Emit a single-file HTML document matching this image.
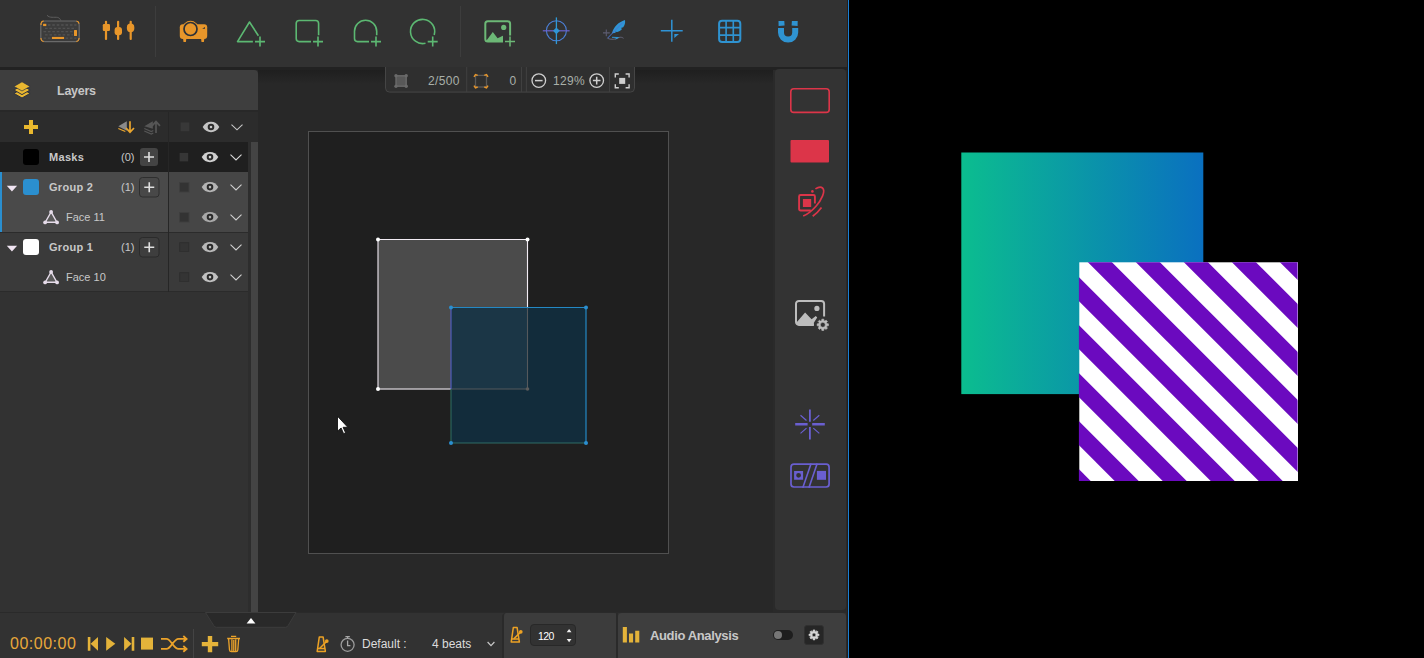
<!DOCTYPE html>
<html lang="en">
<head>
<meta charset="utf-8">
<title>Mapping</title>
<style>
*{box-sizing:border-box;margin:0;padding:0}
html,body{width:1424px;height:658px;overflow:hidden;background:#000;font-family:"Liberation Sans","DejaVu Sans",sans-serif;}
.abs,.app *,.out *{position:absolute}
.app{position:absolute;left:0;top:0;width:848px;height:658px;background:#282828;overflow:hidden}
.toolbar{left:0;top:0;width:848px;height:67px;background:#323232}
.tbshadow{left:0;top:67px;width:848px;height:3px;background:#222}
.vsep{width:1px;background:#3d3d3d}
.layers-head{left:0;top:70px;width:258px;height:40px;background:#3e3e3e;border-top-right-radius:4px}
.layers-head span{left:57px;top:14px;font-size:12.5px;letter-spacing:-.25px;font-weight:bold;color:#c6c6c6;line-height:14px;white-space:nowrap}
.lpanel{left:0;top:112px;width:258px;height:500px;background:#323232}
.row{left:0;width:248px;height:30px}
.row .t{font-size:11px;line-height:12px;color:#c8c8c8;white-space:nowrap}
.row .b{font-weight:bold;letter-spacing:.3px}
.sw{width:16px;height:16px;border-radius:3px;left:23px;top:7px}
.cb{left:179px;top:10px;width:10px;height:10px;background:#333;border:1px solid #3c3c3c}
.cbd{left:180px;top:11px;width:9px;height:9px;background:#363636}
.zt{font-size:12px;line-height:13px;color:#a9b0a9;white-space:nowrap;letter-spacing:.35px}
.bt{font-size:12px;line-height:13px;color:#dcdcdc;white-space:nowrap}
.out{position:absolute;left:849px;top:0;width:575px;height:658px;background:#000;overflow:hidden}
.blueline{left:847px;top:0;width:2px;height:658px;background:#1a80d4;border-left:1px solid #241e1b}
</style>
</head>
<body>
<div class="app">
  <div class="toolbar" id="toolbar">
    <div class="vsep" style="left:155px;top:6px;height:51px"></div>
    <div class="vsep" style="left:460px;top:6px;height:51px"></div>
    <svg style="left:0;top:0" width="848" height="67" viewBox="0 0 848 67" fill="none">
      <!-- keyboard -->
      <path d="M47 15.2c2.5 3.2 7.5 1.6 10.500 2.200c2 .5 2.800 1.800 3.300 3.100" stroke="#5e5e5e" stroke-width="1"/>
      <rect x="40.800" y="21" width="38.400" height="20.600" rx="4" fill="#3c3c3c" stroke="#6a6a6a" stroke-width="1.200"/>
      <g stroke="#515151" stroke-width="1.300" stroke-dasharray="2.600 1.800">
        <path d="M43.500 25h33M45 28.300h31M43.500 31.600h29M45 34.900h28M43.500 38.200h8M65.500 38.200h11"/>
      </g>
      <path d="M41 25v-1.500a3 3 0 0 1 2.600-2.600M76.500 21a3 3 0 0 1 2.600 2.600M41 38v1a3 3 0 0 0 2.600 2.600M79 38v1a3 3 0 0 1-2.600 2.600" stroke="#e8962a" stroke-width="1.200"/>
      <rect x="43.100" y="23.800" width="3.200" height="2.300" fill="#e8962a"/>
      <rect x="74" y="29.900" width="3" height="6.100" rx=".5" fill="#e8962a"/>
      <rect x="51.900" y="36.900" width="12.200" height="2.100" fill="#e8962a"/>
      <!-- sliders -->
      <g fill="#e8962a">
        <rect x="104.900" y="20.800" width="2.200" height="19.200" rx="1"/>
        <rect x="117" y="20.800" width="2.200" height="19.200" rx="1"/>
        <rect x="129.600" y="20.800" width="2.200" height="19.200" rx="1"/>
        <rect x="102.800" y="24" width="7.200" height="7" rx="1.200"/>
        <rect x="114.600" y="27" width="7.400" height="8.200" rx="3"/>
        <rect x="126.900" y="23.600" width="7.400" height="8.600" rx="3.600"/>
      </g>
      <!-- projector -->
      <g fill="#e8962a">
        <rect x="179.800" y="24.300" width="27.400" height="14.800" rx="3"/>
        <circle cx="190.500" cy="29" r="8.200"/>
        <path d="M183 38h3.400l-.5 4h-2.400zM201 38h3.400l-.5 4h-2.400z"/>
      </g>
      <circle cx="190.500" cy="29" r="6.500" stroke="#2c3138" stroke-width="1.700"/>
      <path d="M202.200 28.800l2.800-1.800v1.800z" fill="#2c3138"/>
      <!-- green shape tools -->
      <g stroke="#5cb872" stroke-width="1.600" stroke-linejoin="round">
        <path d="M252.900 41.600H237.500L249.500 22l8.900 13.700M255 41.600h10M260 36.600v10"/>
        <path d="M311 41.600h-11.800a3 3 0 0 1-3-3V23.500a3 3 0 0 1 3-3h16.400a3 3 0 0 1 3 3v11.800M313 41.600h10M318 36.600v10"/>
        <path d="M369 41.600h-11.500a3 3 0 0 1-3-3v-7.300a11.100 11.100 0 0 1 22.200 0v3.900M371 41.600h10M376 36.600v10"/>
        <path d="M425.500 43.200a12.100 12.100 0 1 1 8.700-8.300M427.700 41.600h10M432.700 36.600v10"/>
      </g>
      <!-- image add -->
      <rect x="485.300" y="21.200" width="24.800" height="20.200" rx="2.500" stroke="#6cb876" stroke-width="2"/>
      <circle cx="503.700" cy="27.400" r="2.600" fill="#6cb876"/>
      <path d="M486.500 40.500l6.300-8.500 4.800 6.300 5.300-2.600 5 4.800v1h-21.400z" fill="#6cb876"/>
      <path d="M503 35.500h12v12h-12z" fill="#323232"/>
      <path d="M505 41.600h10M510 36.600v10" stroke="#6cb876" stroke-width="1.500"/>
      <!-- crosshair -->
      <circle cx="556.400" cy="30.800" r="10" stroke="#4b7fd6" stroke-width="1.100"/>
      <path d="M542.800 30.800h26.800" stroke="#6a62cf" stroke-width="1.200"/>
      <path d="M556.400 17.400v26.700" stroke="#2f9ad8" stroke-width="1.300"/>
      <path d="M556.400 27.400l3.400 3.400-3.400 3.400-3.400-3.400z" fill="#2f96d6"/>
      <!-- feather -->
      <path d="M625 20c.5 3-.3 5.500-1.800 7.300l-2.300.6 1.200 1c-1.400 1.500-3 2.500-4.800 3.100l-2.200-.2.700 1c-1.300.4-2.600.5-3.800.4 1.500-6 6-11 13-13.200z" fill="#2f96d6"/>
      <path d="M622.500 22.800L607.500 38.200" stroke="#4a74d0" stroke-width="1"/>
      <path d="M603 32.900h6.800M606.300 29.600v6.600" stroke="#5c5c70" stroke-width="1.100"/>
      <path d="M607.500 38.300c3 1.600 8.500 1.300 11.500-.8 1.600-.6 3.400-.1 4.500.8" stroke="#6a6a80" stroke-width=".9"/>
      <path d="M612 37.300l6.500.2-3 1.500" stroke="#2f96d6" stroke-width="1"/>
      <!-- plus origin -->
      <path d="M660.800 30.800h21.900M671.800 19.800v21.900" stroke="#2f93d6" stroke-width="1.500"/>
      <path d="M674.300 34h4.700l-4.700 4z" fill="#2f93d6"/>
      <!-- grid -->
      <rect x="719.100" y="20.700" width="21.200" height="21.300" rx="3" stroke="#2f93d1" stroke-width="2"/>
      <path d="M726.100 20.700v21.300M733.300 20.700v21.300M719.100 27.600h21.200M719.100 35.100h21.200" stroke="#2f93d1" stroke-width="1.600"/>
      <!-- magnet -->
      <path d="M778 28.100v4.400a10.100 10.100 0 0 0 20.200 0v-4.400h-6v4.400a4.100 4.100 0 0 1-8.200 0v-4.400z" fill="#2f93d1"/>
      <path d="M778.500 21h5.800l.3 4.600-6 .5zM797.700 21h-5.800l-.3 4.600 6 .5z" fill="#2f93d1"/>
    </svg>
  </div>
  <div class="tbshadow"></div>
  <div class="layers-head"><span>Layers</span>
    <svg style="left:0;top:0" width="60" height="40" viewBox="0 70 60 40">
      <path d="M22 88.8l-8.100 4.600 8.100 4.600 8.100-4.600z" fill="#e9b730" stroke="#2c3140" stroke-width="1"/>
      <path d="M22 85.4l-8.100 4.600 8.100 4.600 8.100-4.600z" fill="#e9b730" stroke="#2c3140" stroke-width="1"/>
      <path d="M22 81.8l-8.100 4.600 8.100 4.600 8.100-4.600z" fill="#e9b730" stroke="#2c3140" stroke-width="0.7"/>
    </svg></div>
  <div class="lpanel" id="lpanel">
    <div class="abs" style="left:0;top:0;width:258px;height:30px;background:#2c2c2c"></div>
    <div class="abs" style="left:0;top:30px;width:248px;height:30px;background:#1f1f1f"></div>
    <div class="abs" style="left:0;top:60px;width:248px;height:60px;background:#4a4a4a"></div>
    <div class="abs" style="left:168px;top:60px;width:80px;height:60px;background:#464646"></div>
    <div class="abs" style="left:0;top:60px;width:1.500px;height:60px;background:#2a8fd0"></div>
    <div class="abs" style="left:0;top:120px;width:248px;height:60px;background:#3a3a3a"></div>
    
    <div class="abs" style="left:0;top:120px;width:248px;height:1px;background:#2b2b2b"></div>
    <div class="abs" style="left:0;top:179px;width:248px;height:1px;background:#2b2b2b"></div>
    <div class="abs" style="left:168px;top:0;width:1px;height:180px;background:#262626"></div>
    <div class="abs" style="left:248px;top:30px;width:3px;height:470px;background:#2d2d2d"></div>
    <div class="abs" style="left:251px;top:30px;width:7px;height:470px;background:#444"></div>
    <div class="row" style="top:30px"><div class="sw" style="background:#000"></div><span class="t b" style="left:49px;top:9px">Masks</span><span class="t" style="left:121px;top:9px">(0)</span></div>
    <div class="row" style="top:60px"><div class="sw" style="background:#2b8fcf"></div><span class="t b" style="left:49px;top:9px">Group 2</span><span class="t" style="left:121px;top:9px">(1)</span></div>
    <div class="row" style="top:90px"><span class="t" style="left:66px;top:9px">Face 11</span></div>
    <div class="row" style="top:120px"><div class="sw" style="background:#fff"></div><span class="t b" style="left:49px;top:9px">Group 1</span><span class="t" style="left:121px;top:9px">(1)</span></div>
    <div class="row" style="top:150px"><span class="t" style="left:66px;top:9px">Face 10</span></div>
    <svg style="left:0;top:0" width="258" height="200" viewBox="0 112 258 200" fill="none">
      <path d="M24 127h14M31 120v14" stroke="#e9b82e" stroke-width="4"/>
      <!-- import down -->
      <path d="M118.300 126.200l8.500-5v9.500z" fill="#8a8a8a"/>
      <path d="M118.300 128.500l7 3" stroke="#e9a52e" stroke-width="1.300"/>
      <path d="M130 121.300v10.500M126 128l4 4.200 4-4.200" stroke="#e9a52e" stroke-width="1.700"/>
      <!-- export up -->
      <path d="M144.300 126.200l8.500-5v7.500z" fill="#565656"/>
      <path d="M144.300 128.500l7 3 2-1M144.300 131l7 3 2-1" stroke="#565656" stroke-width="1.200"/>
      <path d="M156 133v-11M152 125.800l4-4.200 4 4.200" stroke="#565656" stroke-width="1.700"/>
      <rect x="180.600" y="122.500" width="8.700" height="8.700" fill="#383838"/>
      <g transform="translate(211 127)"><path d="M-8.300 0C-6.500-3.400-3.500-5.200 0-5.200S6.500-3.400 8.300 0C6.500 3.400 3.500 5.200 0 5.200S-6.500 3.400-8.300 0z" fill="#c4c4c4"/><circle r="2.300" fill="none" stroke="#2a2a2a" stroke-width="2"/></g>
      <path d="M231.5 124.60000000000001l5.500 5.200 5.500-5.200" stroke="#c8c8c8" stroke-width="1.100" fill="none"/>
      <!-- masks row -->
      <rect x="140" y="148" width="18" height="18" rx="3" fill="#444" /><path d="M144.0 157.0h10M149.0 152.0v10" stroke="#e0e0e0" stroke-width="1.600"/>
      <rect x="179.600" y="152.900" width="8.600" height="8.500" fill="#363636"/>
      <g transform="translate(210 157.1)"><path d="M-8.300 0C-6.500-3.400-3.500-5.200 0-5.200S6.500-3.400 8.300 0C6.500 3.400 3.500 5.200 0 5.200S-6.500 3.400-8.300 0z" fill="#d0d0d0"/><circle r="2.300" fill="none" stroke="#2a2a2a" stroke-width="2"/></g>
      <path d="M230.5 154.70000000000002l5.500 5.200 5.500-5.200" stroke="#d8d8d8" stroke-width="1.100" fill="none"/>
      <!-- group 2 -->
      <path d="M6.800 185.8h10.300l-5.150 5.800z" fill="#f0e4f2"/>
      <rect x="139.5" y="177.5" width="19.5" height="19.5" rx="3" fill="#484848" stroke="#2e2e2e" stroke-width="1"/><path d="M144.25 187.25h10M149.25 182.25v10" stroke="#e0e0e0" stroke-width="1.600"/>
      <rect x="179.500" y="182.500" width="9.500" height="9.500" fill="#333" stroke="#3e3e3e" stroke-width="1"/>
      <g transform="translate(210 187.1)"><path d="M-8.300 0C-6.500-3.400-3.500-5.200 0-5.200S6.500-3.400 8.300 0C6.500 3.400 3.500 5.200 0 5.200S-6.500 3.400-8.300 0z" fill="#b4b4b4"/><circle r="2.300" fill="none" stroke="#2a2a2a" stroke-width="2"/></g>
      <path d="M230.5 184.70000000000002l5.500 5.200 5.500-5.200" stroke="#d0d0d0" stroke-width="1.100" fill="none"/>
      <g><path d="M51.100 212L45.300 222.2H56.900z" fill="#5a5a5a" stroke="#e6dcea" stroke-width="1.400"/><circle cx="51.100" cy="211.9" r="1.900" fill="#e6dcea"/><circle cx="45.100" cy="222.4" r="1.900" fill="#e6dcea"/><circle cx="57.100" cy="222.4" r="1.900" fill="#e6dcea"/></g>
      <rect x="179.500" y="212.500" width="9.500" height="9.500" fill="#333" stroke="#3e3e3e" stroke-width="1"/>
      <g transform="translate(210 217.1)"><path d="M-8.300 0C-6.500-3.400-3.500-5.200 0-5.200S6.500-3.400 8.300 0C6.500 3.400 3.500 5.200 0 5.200S-6.500 3.400-8.300 0z" fill="#a8a8a8"/><circle r="2.300" fill="none" stroke="#2a2a2a" stroke-width="2"/></g>
      <path d="M230.5 214.70000000000002l5.500 5.200 5.500-5.200" stroke="#d0d0d0" stroke-width="1.100" fill="none"/>
      <!-- group 1 -->
      <path d="M6.800 245.8h10.300l-5.150 5.800z" fill="#f0e4f2"/>
      <rect x="139.5" y="237.5" width="19.5" height="19.5" rx="3" fill="#3e3e3e" stroke="#2b2b2b" stroke-width="1"/><path d="M144.25 247.25h10M149.25 242.25v10" stroke="#e0e0e0" stroke-width="1.600"/>
      <rect x="179.700" y="242.700" width="9" height="8.800" fill="#343434" stroke="#2f2f2f" stroke-width="1"/>
      <g transform="translate(210 247.1)"><path d="M-8.300 0C-6.500-3.400-3.500-5.200 0-5.200S6.500-3.400 8.300 0C6.500 3.400 3.500 5.200 0 5.200S-6.500 3.400-8.300 0z" fill="#b8b8b8"/><circle r="2.300" fill="none" stroke="#2a2a2a" stroke-width="2"/></g>
      <path d="M230.5 244.70000000000002l5.500 5.200 5.500-5.200" stroke="#d0d0d0" stroke-width="1.100" fill="none"/>
      <g><path d="M51.100 272L45.300 282.2H56.900z" fill="#5a5a5a" stroke="#e6dcea" stroke-width="1.400"/><circle cx="51.100" cy="271.9" r="1.900" fill="#e6dcea"/><circle cx="45.100" cy="282.4" r="1.900" fill="#e6dcea"/><circle cx="57.100" cy="282.4" r="1.900" fill="#e6dcea"/></g>
      <rect x="179.700" y="272.700" width="9" height="8.800" fill="#343434" stroke="#2f2f2f" stroke-width="1"/>
      <g transform="translate(210 277.1)"><path d="M-8.300 0C-6.500-3.400-3.500-5.200 0-5.200S6.500-3.400 8.300 0C6.500 3.400 3.500 5.200 0 5.200S-6.500 3.400-8.300 0z" fill="#c0c0c0"/><circle r="2.300" fill="none" stroke="#2a2a2a" stroke-width="2"/></g>
      <path d="M230.5 274.7l5.500 5.200 5.500-5.200" stroke="#d0d0d0" stroke-width="1.100" fill="none"/>
    </svg>
  </div>
  <div id="canvasarea">
    <div class="abs" style="left:258px;top:70px;width:515px;height:14px;background:linear-gradient(#1f1f1f,#282828)"></div>
    <div class="abs" style="left:308px;top:131px;width:361px;height:423px;background:#1f1f1f;border:1px solid #505050"></div>
    <svg style="left:258px;top:67px" width="515" height="545" viewBox="258 67 515 545" fill="none">
      <!-- zoom bar -->
      <path d="M385.500 66.500h249v21.600a4 4 0 0 1-4 4h-241a4 4 0 0 1-4-4z" fill="#2f2f2f" stroke="#454545" stroke-width="1"/>
      <path d="M466.700 67v25M521.500 67v25M526.400 67v25M609.500 67v25" stroke="#404040" stroke-width="1"/>
      <rect x="396" y="75.800" width="10.200" height="10.400" fill="#585858" stroke="#6a6a6a" stroke-width="1.400"/>
      <g fill="#6a6a6a"><circle cx="396" cy="75.800" r="1.700"/><circle cx="406.200" cy="75.800" r="1.700"/><circle cx="396" cy="86.200" r="1.700"/><circle cx="406.200" cy="86.200" r="1.700"/></g>
      <rect x="475.500" y="75.400" width="11" height="11.600" stroke="#5a5a5a" stroke-width="1.300"/>
      <path d="M474 76.800l1.500-2.200 2.200.8M488 76.800l-1.500-2.200-2.200.8M474 85.600l1.500 2.200 2.200-.8M488 85.600l-1.500 2.200-2.200-.8" stroke="#e8962a" stroke-width="1.500"/>
      <circle cx="538.800" cy="80.600" r="6.800" stroke="#cfcfcf" stroke-width="1.300"/><path d="M535 80.600h7.600" stroke="#cfcfcf" stroke-width="1.500"/>
      <circle cx="596.700" cy="80.600" r="6.800" stroke="#cfcfcf" stroke-width="1.300"/><path d="M592.900 80.600h7.600M596.700 76.800v7.600" stroke="#cfcfcf" stroke-width="1.500"/>
      <path d="M615.300 77.500v-3.500h3.500M625.600 74h3.500v3.500M629.100 84.300v3.500h-3.500M618.800 87.800h-3.500v-3.500" stroke="#cfcfcf" stroke-width="1.400"/>
      <rect x="619.200" y="77.900" width="6" height="6" fill="#cfcfcf"/>
      <!-- faces -->
      <rect x="378" y="239.500" width="149.500" height="149.500" fill="#4b4b4b"/>
      <path d="M527.500 239.500v149.500H378" stroke="#5c5c5c" stroke-width="1.200"/>
      <path d="M378 389V239.500h149.500v68" stroke="#f2ecf4" stroke-width="1.100"/>
      <path d="M378 389h73" stroke="#f2ecf4" stroke-width="1.100"/>
      <rect x="451" y="307.500" width="135" height="135.500" fill="#122c3b"/>
      <rect x="451" y="307.500" width="76.500" height="81.500" fill="#1b3646"/>
      <path d="M527.500 307.500v81.500H451" stroke="#55595c" stroke-width="1.100"/>
      <path d="M451 307.500h135v135.500" stroke="#2488c4" stroke-width="1.200"/>
      <path d="M451 307.500V389" stroke="#5560c8" stroke-width="1.100"/>
      <path d="M451 389v54" stroke="#2c6a5e" stroke-width="1.100"/>
      <path d="M451 443h135" stroke="#2f6d66" stroke-width="1.100"/>
      <g fill="#fff"><circle cx="378" cy="239.500" r="2"/><circle cx="527.500" cy="239.500" r="2"/><circle cx="378" cy="389" r="2"/></g>
      <circle cx="527.500" cy="389" r="1.800" fill="#5c5c5c"/>
      <g fill="#2b8fd0"><circle cx="451" cy="307.500" r="2"/><circle cx="586" cy="307.500" r="2"/><circle cx="451" cy="443" r="2"/><circle cx="586" cy="443" r="2"/></g>
      <!-- cursor -->
      <path transform="translate(-1 -1.300)" d="M338.500 417.500v15l3.600-3.200 2.500 5.700 2-.9-2.500-5.500h4.700z" fill="#fff" stroke="#111" stroke-width=".9"/>
    </svg>
    <span class="abs zt" style="left:428px;top:75px">2/500</span>
    <span class="abs zt" style="left:509.500px;top:75px">0</span>
    <span class="abs zt" style="left:553px;top:75px">129%</span>
  </div>
  <div id="rtools">
    <div class="abs" style="left:773px;top:70px;width:75px;height:542px;background:#2a2a2a"></div>
    <div class="abs" style="left:775px;top:69px;width:71px;height:541px;background:#333;border-radius:4px"></div>
    <svg style="left:775px;top:69px" width="71" height="541" viewBox="775 69 71 541" fill="none">
      <rect x="790.800" y="88.800" width="38.400" height="23.600" rx="3" stroke="#dc3549" stroke-width="1.600"/>
      <rect x="790.500" y="140" width="38.500" height="22.500" rx="1" fill="#dc3549"/>
      <g id="copyrot" stroke="#dc3549" fill="none">
        <path d="M814.900 203.500V196.400a1.400 1.400 0 0 0-1.400-1.400H800.500a1.400 1.400 0 0 0-1.400 1.400v12.700a1.400 1.400 0 0 0 1.400 1.400H810.800" stroke-width="1.900"/>
        <rect x="802.900" y="199" width="8.300" height="8" fill="#dc3549" stroke="none"/>
        <path d="M815.400 188.900c2.600-1.700 5.600-2.200 7.100-.9 3.400 3-1 12-6.500 18.200-4 4.500-8.600 8-12.800 9.900" stroke-width="1.700"/>
        <path d="M821.500 207.400c-2.400 3.200-5.400 6.400-8.800 8.900" stroke-width="1.700"/>
        <circle cx="812.400" cy="191.400" r="1.300" fill="#dc3549" stroke="none"/>
      </g>
      <g id="imgset">
        <path d="M813.900 324.900h-15a2.900 2.900 0 0 1-2.900-2.900v-18.200a2.900 2.900 0 0 1 2.900-2.900h22.300a2.900 2.900 0 0 1 2.900 2.900v12.800" stroke="#bdbdbd" stroke-width="2"/>
        <circle cx="816.900" cy="308.400" r="2.600" fill="#bdbdbd"/>
        <path d="M796.500 322.500l8.600-9.900 6.500 6.700 4.200-3.200 1.400 1.500-3.300 5.100v2.200h-16.500z" fill="#bdbdbd"/>
        <path d="M828.42 323.82L828.42 325.78L826.96 325.87L826.50 326.99L827.46 328.08L826.08 329.46L824.99 328.50L823.87 328.96L823.78 330.42L821.82 330.42L821.73 328.96L820.61 328.50L819.52 329.46L818.14 328.08L819.10 326.99L818.64 325.87L817.18 325.78L817.18 323.82L818.64 323.73L819.10 322.61L818.14 321.52L819.52 320.14L820.61 321.10L821.73 320.64L821.82 319.18L823.78 319.18L823.87 320.64L824.99 321.10L826.08 320.14L827.46 321.52L826.50 322.61L826.96 323.73zM820.30 324.80a2.5 2.5 0 1 0 5.0 0a2.5 2.5 0 1 0 -5.0 0z" fill="#bdbdbd" fill-rule="evenodd" stroke="#bdbdbd" stroke-width=".6" stroke-linejoin="round"/>
      </g>
      <g id="spark" stroke="#6a5fd0">
        <path d="M809.900 409.400v12.400M809.900 427v12.500" stroke-width="1.800"/>
        <path d="M795.200 424.300h12.400M812.200 424.300h12.600" stroke-width="2.400"/>
        <path d="M800.500 415.200l6 5.300M819.300 415.200l-6 5.300M800.500 433.400l6-5.300M819.300 433.400l-6-5.300" stroke-width="1.200"/>
      </g>
      <g id="split">
        <rect x="791" y="464.200" width="38.100" height="22.800" rx="3" stroke="#6a5fd0" stroke-width="1.700"/>
        <path d="M811.100 463.500l-8.300 24.200M817.200 463.500l-8.300 24.200" stroke="#6a5fd0" stroke-width="1.600"/>
        <path d="M794.100 470.900h9v8.900h-9zM796.200 475.350a2.400 2.400 0 1 0 4.800 0a2.400 2.400 0 1 0-4.800 0z" fill="#6a5fd0" fill-rule="evenodd"/>
        <rect x="816.900" y="470.900" width="9.100" height="8.900" fill="#6a5fd0"/>
      </g>
    </svg>
  </div>
  <div id="bottombar">
    <div class="abs" style="left:0;top:612px;width:848px;height:46px;background:#323232"></div>
    <div class="abs" style="left:0;top:612px;width:848px;height:1px;background:#2a2a2a"></div>
    <div class="abs" style="left:502px;top:613px;width:115px;height:45px;background:#3c3c3c;border-left:2px solid #2a2a2a;border-top-left-radius:4px;border-top-right-radius:3px"></div>
    <div class="abs" style="left:616px;top:612px;width:2px;height:46px;background:#2a2a2a"></div>
    <div class="abs" style="left:618px;top:613px;width:228px;height:45px;background:#3e3e3e;border-top-left-radius:4px;border-top-right-radius:4px"></div>
    <div class="abs" style="left:846px;top:612px;width:2px;height:46px;background:#2a2a2a"></div>
    <div class="abs" style="left:193px;top:629px;width:1px;height:29px;background:#444"></div>
    <div class="abs" style="left:530px;top:624px;width:46px;height:22px;background:#323232;border:1.500px solid #282828;border-radius:4px"></div>
    <div class="abs" style="left:804px;top:625px;width:20px;height:20px;background:#262626;border:1px solid #303030;border-radius:3px"></div>
    <div class="abs" style="left:773px;top:630px;width:20px;height:10px;background:#1e1e1e;border-radius:5px"></div>
    <div class="abs" style="left:774px;top:631px;width:8px;height:8px;background:#767676;border-radius:4px"></div>
    <span class="abs" style="left:10px;top:635px;font-size:16px;line-height:18px;letter-spacing:.5px;color:#e9a83a;white-space:nowrap">00:00:00</span>
    <span class="abs bt" style="left:362px;top:638px">Default :</span>
    <span class="abs bt" style="left:432px;top:638px">4 beats</span>
    <span class="abs" style="left:538px;top:630px;font-size:10.5px;line-height:12px;color:#fff;letter-spacing:-.6px">120</span>
    <span class="abs" style="left:650px;top:629px;font-size:13px;line-height:14px;font-weight:bold;color:#c8c8c8;white-space:nowrap;letter-spacing:-.37px">Audio Analysis</span>
    <svg style="left:0;top:612px" width="848" height="46" viewBox="0 612 848 46" fill="none">
      <path d="M205.500 612.500h90.500l-8 13.200a3 3 0 0 1-2.500 1.600h-69.200a3 3 0 0 1-2.500-1.600z" fill="#292929" stroke="#3c3c3c" stroke-width="1"/>
      <path d="M246.600 623.400l4.400-5.400 4.400 5.400z" fill="#fff"/>
      <g fill="#e4b33a">
        <path d="M87.800 637h2.600v13.700h-2.600zM98 637v13.700l-7.400-6.850z"/>
        <path d="M106.200 637l9.100 6.850-9.100 6.850z"/>
        <path d="M124.100 637l7.400 6.850-7.400 6.850zM131.700 637h2.600v13.700h-2.600z"/>
        <rect x="141" y="637.600" width="12" height="12"/>
        <path d="M201.800 642h16.400v4.300h-16.400zM207.800 635.900h4.400v16.400h-4.400z"/>
      </g>
      <path d="M161 638.900h5.500c4.500 0 7 10 12 10h6.500M161 648.900h5.500c4.500 0 7-10 12-10h6.500M183.300 636l3.300 2.900-3.300 2.900M183.300 646l3.300 2.900-3.300 2.900" stroke="#eca32a" stroke-width="1.800"/>
      <path d="M228.600 638.800l.9 11.200a1.800 1.800 0 0 0 1.800 1.600h4.700a1.800 1.800 0 0 0 1.800-1.600l.9-11.200M227.200 638.500h12.800M231 636.300h5.200M231.900 639.500v11.500M235.700 639.500v11.500M233.800 640v11" stroke="#eca32a" stroke-width="1.300"/>
      <g transform="translate(317 636.2)" stroke="#eda224" stroke-width="1.500" fill="none" stroke-linejoin="round"><path d="M2.300 .700h3.800l2.300 14.500h-8.200zM.600 12.200h7.200" fill="#3a3a3a"/><path d="M2.800 12L9.800 5"/><circle cx="9.800" cy="4.900" r="1.100" fill="#eda224"/></g>
      <circle cx="347.600" cy="644.800" r="6.500" stroke="#9c9c9c" stroke-width="1.300"/><path d="M347.600 640.600v5h2.800M345.400 636.700h4.400M347.600 636.700v1.800" stroke="#a8a8a8" stroke-width="1.300"/>
      <path d="M487.600 642l3.400 3.600 3.400-3.600" stroke="#c8c8c8" stroke-width="1.200"/>
      <g transform="translate(511 626.9)" stroke="#eda224" stroke-width="1.500" fill="none" stroke-linejoin="round"><path d="M2.300 .700h3.800l2.300 14.500h-8.200zM.600 12.200h7.200" fill="#3a3a3a"/><path d="M2.800 12L9.800 5"/><circle cx="9.800" cy="4.900" r="1.100" fill="#eda224"/></g>
      <path d="M566.700 632.200l2.400-3.200 2.400 3.200zM566.700 639.100l2.400 3.100 2.400-3.100z" fill="#f0f0f0"/>
      <path d="M622.800 627h4.100v15.600h-4.100zM629 633.500h4.100v9.100h-4.100zM635.200 630.700h4.100v11.900h-4.100z" fill="#e4b33a"/>
      <path d="M819.02 634.02L819.02 635.78L817.68 635.85L817.27 636.83L818.17 637.83L816.93 639.07L815.93 638.17L814.95 638.58L814.88 639.92L813.12 639.92L813.05 638.58L812.07 638.17L811.07 639.07L809.83 637.83L810.73 636.83L810.32 635.85L808.98 635.78L808.98 634.02L810.32 633.95L810.73 632.97L809.83 631.97L811.07 630.73L812.07 631.63L813.05 631.22L813.12 629.88L814.88 629.88L814.95 631.22L815.93 631.63L816.93 630.73L818.17 631.97L817.27 632.97L817.68 633.95zM812.10 634.90a1.9 1.9 0 1 0 3.8 0a1.9 1.9 0 1 0 -3.8 0z" fill="#d4d4d4" fill-rule="evenodd" stroke="#d4d4d4" stroke-width=".6" stroke-linejoin="round"/>
    </svg>
  </div>
</div>
<div class="abs blueline"></div>
<div class="out" id="out">
  <svg style="left:0;top:0" width="575" height="658" viewBox="849 0 575 658">
    <defs>
      <linearGradient id="gg" x1="0" x2="1" y1="0" y2="0">
        <stop offset="0" stop-color="#0bbd8f"/><stop offset="1" stop-color="#0a70c0"/>
      </linearGradient>
      <clipPath id="sc"><rect x="1079.3" y="262.3" width="218.7" height="218.7"/></clipPath>
    </defs>
    <rect x="961.3" y="152.5" width="242" height="241.6" fill="url(#gg)"/>
    <rect x="1079.3" y="262.3" width="218.7" height="218.7" fill="#fff"/>
    <g clip-path="url(#sc)" fill="#6b0abf" transform="translate(-.4 0)">
      <polygon points="838.4,252.3 862.4,252.3 1101.1,491.0 1077.1,491.0"/>
      <polygon points="886.4,252.3 910.4,252.3 1149.1,491.0 1125.1,491.0"/>
      <polygon points="934.4,252.3 958.4,252.3 1197.1,491.0 1173.1,491.0"/>
      <polygon points="982.4,252.3 1006.4,252.3 1245.1,491.0 1221.1,491.0"/>
      <polygon points="1030.4,252.3 1054.4,252.3 1293.1,491.0 1269.1,491.0"/>
      <polygon points="1078.4,252.3 1102.4,252.3 1341.1,491.0 1317.1,491.0"/>
      <polygon points="1126.4,252.3 1150.4,252.3 1389.1,491.0 1365.1,491.0"/>
      <polygon points="1174.4,252.3 1198.4,252.3 1437.1,491.0 1413.1,491.0"/>
      <polygon points="1222.4,252.3 1246.4,252.3 1485.1,491.0 1461.1,491.0"/>
      <polygon points="1270.4,252.3 1294.4,252.3 1533.1,491.0 1509.1,491.0"/>
    </g>
  </svg>
</div>
</body>
</html>
